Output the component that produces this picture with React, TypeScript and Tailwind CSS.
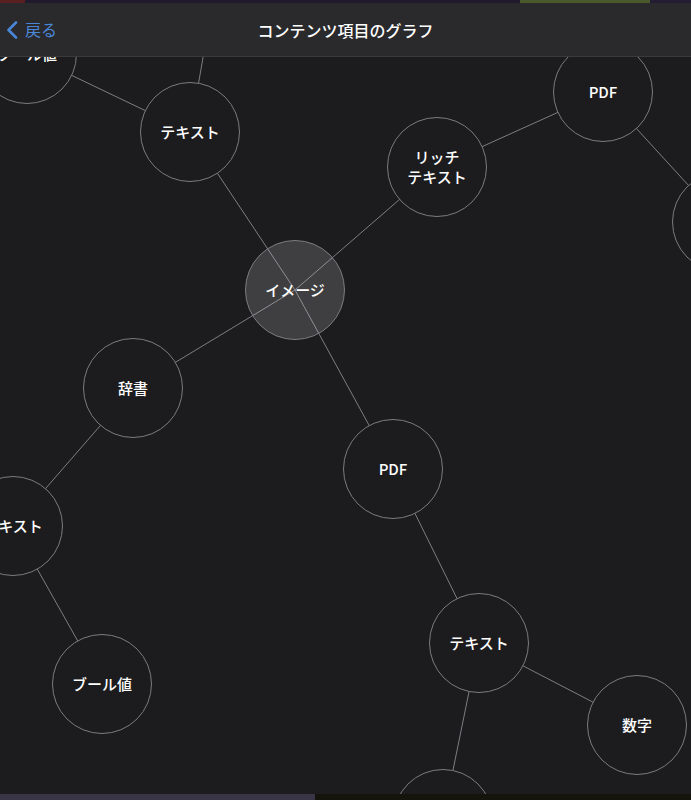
import React from "react";

type Node = { id: string; x: number; y: number; label: string[]; selected?: boolean };

// page coordinates, canvas starts at y = 57
const TOP = 57;

const nodes: Node[] = [
  { id: "a", x: 27, y: 54, label: ["ブール値"] },
  { id: "b", x: 190, y: 132, label: ["テキスト"] },
  { id: "c", x: 221, y: -45, label: [] },
  { id: "d", x: 603, y: 92, label: ["PDF"] },
  { id: "e", x: 437, y: 167, label: ["リッチ", "テキスト"] },
  { id: "f", x: 722, y: 222, label: ["テキスト"] },
  { id: "g", x: 295, y: 290, label: ["イメージ"], selected: true },
  { id: "h", x: 133, y: 388, label: ["辞書"] },
  { id: "i", x: 393, y: 469, label: ["PDF"] },
  { id: "j", x: 13, y: 526, label: ["テキスト"] },
  { id: "k", x: 102, y: 684, label: ["ブール値"] },
  { id: "l", x: 479, y: 643, label: ["テキスト"] },
  { id: "m", x: 637, y: 725, label: ["数字"] },
  { id: "n", x: 443, y: 819, label: [] },
];

const edges: [string, string][] = [
  ["a", "b"],
  ["b", "c"],
  ["b", "g"],
  ["g", "e"],
  ["e", "d"],
  ["d", "f"],
  ["g", "h"],
  ["g", "i"],
  ["h", "j"],
  ["j", "k"],
  ["i", "l"],
  ["l", "m"],
  ["l", "n"],
];

const byId = Object.fromEntries(nodes.map((n) => [n.id, n]));

function GraphNode({ node }: { node: Node }) {
  return (
    <div
      className={
        "absolute flex h-[100px] w-[100px] -translate-x-1/2 -translate-y-1/2 flex-col items-center justify-center rounded-full border border-[#7c7c80] text-center text-[15px] font-medium leading-[20px] text-white " +
        (node.selected ? "bg-[rgba(235,235,245,0.17)]" : "bg-[#1c1c1e]")
      }
      style={{ left: node.x, top: node.y - TOP }}
    >
      {node.label.map((l) => (
        <span key={l} className="whitespace-nowrap">
          {l}
        </span>
      ))}
    </div>
  );
}

export default function App() {
  return (
    <div
      className="flex h-[800px] w-full flex-col overflow-hidden bg-[#1c1c1e]"
      style={{ fontFamily: '"Noto Sans CJK JP", "Noto Sans", sans-serif' }}
    >
      {/* strip of the screen behind */}
      <div className="flex h-[3px] shrink-0">
        <div className="w-[25px] bg-[#5a2020]" />
        <div className="w-[495px] bg-[#1f1a2c]" />
        <div className="w-[130px] bg-[#4b5a2b]" />
        <div className="flex-1 bg-[#231d33]" />
      </div>

      <header className="relative z-10 flex h-[54px] shrink-0 items-center border-b border-[#3a3a3c] bg-[#2a2a2c]">
        <button className="flex items-center gap-[7px] pl-[6px] text-[16px] text-[#4a86d8]">
          <svg width="12" height="18" viewBox="0 0 12 18" fill="none">
            <path d="M10 1.5 2.5 9 10 16.5" stroke="#4a86d8" strokeWidth="2.6" strokeLinecap="round" strokeLinejoin="round" />
          </svg>
          <span className="-mt-px">戻る</span>
        </button>
        <h1 className="absolute left-1/2 -translate-x-1/2 text-[16px] font-medium text-white">
          コンテンツ項目のグラフ
        </h1>
      </header>

      <main className="relative flex-1 overflow-hidden">
        <svg className="absolute inset-0 h-full w-full">
          {edges.map(([from, to]) => {
            const p = byId[from];
            const q = byId[to];
            return (
              <line
                key={from + to}
                x1={p.x}
                y1={p.y - TOP}
                x2={q.x}
                y2={q.y - TOP}
                stroke="#7e7e82"
                strokeWidth="1"
              />
            );
          })}
        </svg>
        {nodes.map((n) => (
          <GraphNode key={n.id} node={n} />
        ))}
      </main>

      <div className="flex h-[6px] shrink-0">
        <div className="w-[315px] bg-[#3a3546]" />
        <div className="flex-1 bg-[#14130c]" />
      </div>
    </div>
  );
}
